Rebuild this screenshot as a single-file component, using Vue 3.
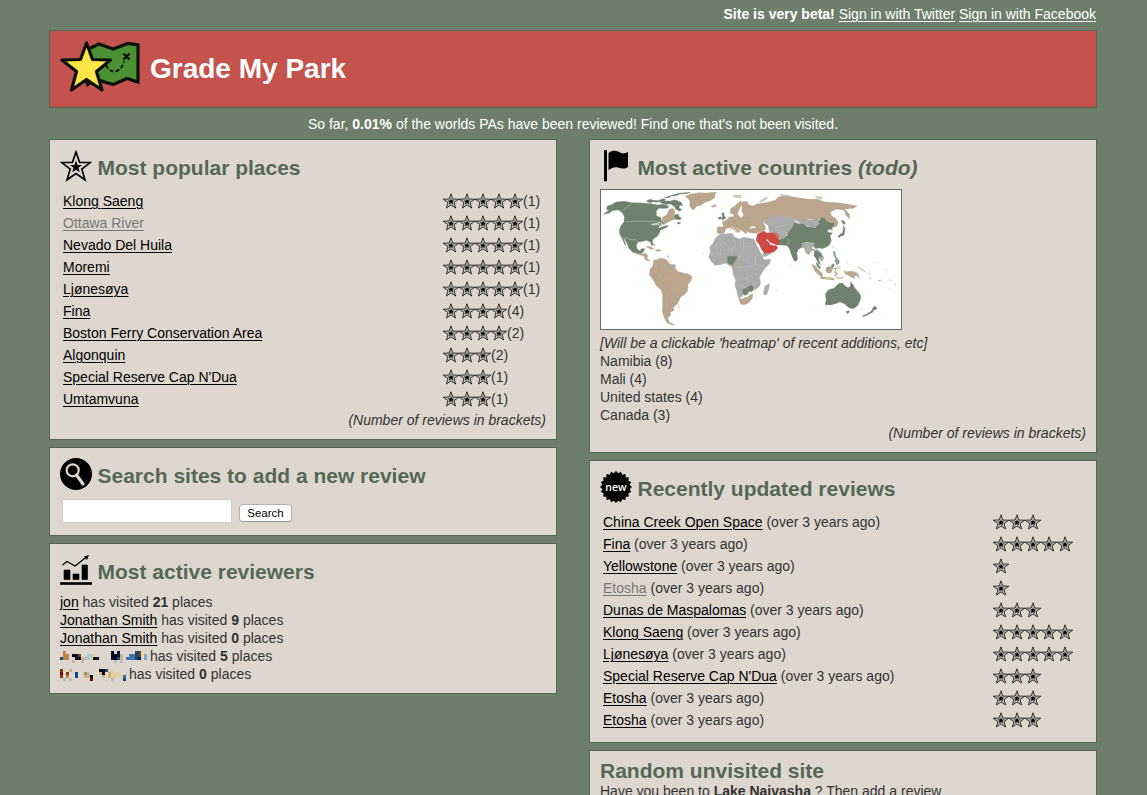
<script setup>
const places = [
  ['Klong Saeng', 5, 1], ['Ottawa River', 5, 1, true], ['Nevado Del Huila', 5, 1], ['Moremi', 5, 1],
  ['Ljønesøya', 5, 1], ['Fina', 4, 4], ['Boston Ferry Conservation Area', 4, 2], ['Algonquin', 3, 2],
  ["Special Reserve Cap N'Dua", 3, 1], ['Umtamvuna', 3, 1],
]
const reviews = [
  ['China Creek Open Space', 3], ['Fina', 5], ['Yellowstone', 1], ['Etosha', 1, true], ['Dunas de Maspalomas', 3],
  ['Klong Saeng', 5], ['Ljønesøya', 5], ["Special Reserve Cap N'Dua", 3], ['Etosha', 3], ['Etosha', 3],
]
const reviewers = [['jon', 21], ['Jonathan Smith', 9], ['Jonathan Smith', 0]]
const countries = [['Namibia', 8], ['Mali', 4], ['United states', 4], ['Canada', 3]]

const palette = {
  k: '#05050f', n: '#0a1648', b: '#0c4d86', l: '#a9c8cf', s: '#7faac4', o: '#bd8447', r: '#7c3e08',
  t: '#d3b17e', c: '#e0d2a5', g: '#bdb8b4', m: '#70000a', u: '#3b75a8',
}
const mosaics = [
  { cols: 29, visited: 5, rows: ['.o...............k.n.....br..', '.oo.knr..llc.....kknt..uubr.s', 'boo..kktglcknc...nkbt.uuubn.s', '....g..g..........g.g........'] },
  { cols: 22, visited: 0, rows: ['r..t.........kkbcc....', 'm.r..b..ol...tk.tccc..', 'r.o..b..ttk...t.tccccu', '.g.g......m......g...b'] },
]
const cells = mosaics.map(m => m.rows.flatMap((r, y) => [...r].map((c, x) => ({ x: x * 3, y: y * 3, c: palette[c] })).filter(p => p.c)))

const sealPoints = Array.from({ length: 40 }, (_, i) => {
  const r = i % 2 ? 13.8 : 16
  const a = (i * Math.PI) / 20
  return `${(16 + r * Math.sin(a)).toFixed(2)},${(16 - r * Math.cos(a)).toFixed(2)}`
}).join(' ')
</script>

<template>
  <div class="page">
    <svg class="defs" width="0" height="0">
      <symbol id="star" viewBox="0 0 32 32">
        <path d="M16 2 19.600 12.300 30.400 12.500 21.800 19 25 29.800 16 23.500 7 29.800 10.200 19 1.600 12.500 12.400 12.300Z" fill="none" stroke="#080808" stroke-width="1.700" />
        <path d="M16 10.500 17.600 14.900 22 15 18.500 17.800 19.700 22.200 16 19.700 12.300 22.200 13.500 17.800 10 15 14.400 14.900Z" fill="#080808" />
      </symbol>
      <symbol id="smallstar" viewBox="0 0 16 16">
        <path d="M8 .8 9.800 6 15.800 6.200 11.100 9.600 12.600 15 8 11.900 3.400 15 4.900 9.600.2 6.200 6.200 6Z" fill="#bbb6b0" stroke="#20201f" stroke-width=".9" />
        <path d="M8 5.400 8.900 7.500 11.100 7.600 9.500 9 10 11.200 8 10.100 6 11.200 6.500 9 4.900 7.600 7.100 7.500Z" fill="#080808" />
      </symbol>
    </svg>
    <div class="signin"><b>Site is very beta!</b> <a>Sign in with Twitter</a> <a>Sign in with Facebook</a></div>
    <header class="banner">
      <svg width="80" height="56" viewBox="0 0 80 56">
        <path d="M26 10 39 4 53 9 68 3.500 78 5V42L67 38.500 53 44.500 38 40 28 44Z" fill="#4b9134" stroke="#0c110c" stroke-width="3.200" />
        <path d="M46 25Q49 32 55 31.500Q62 30 64 21" fill="none" stroke="#0c110c" stroke-width="1.900" stroke-dasharray="4 2.200" />
        <path d="m63.500 13.500 6 6m0-6-6 6" stroke="#0c110c" stroke-width="2.400" />
        <path d="m25 42 8 1-6 4Z" fill="#0c110c" />
        <path d="M26.500 3 32.500 19.500 50.500 20 36.500 31.500 42 50 26.500 39.500 11.500 50 16.500 31.500 2 20 20.500 19.500Z" fill="#fce547" stroke="#0c110c" stroke-width="3.200" stroke-linejoin="round" />
      </svg>
      <h1>Grade My Park</h1>
    </header>
    <p class="tagline">So far, <b>0.01%</b> of the worlds PAs have been reviewed! Find one that's not been visited.</p>

    <main class="columns">
      <div class="column">
        <section class="card">
          <div class="head"><svg width="32" height="32"><use href="#star" /></svg><h2>Most popular places</h2></div>
          <div class="table">
            <div v-for="p in places" :key="p[0]" class="row">
              <span class="name"><a :class="{ seen: p[3] }">{{ p[0] }}</a></span>
              <svg v-for="n in p[1]" :key="n" width="16" height="16"><use href="#smallstar" /></svg><span>({{ p[2] }})</span>
            </div>
          </div>
          <p class="note">(Number of reviews in brackets)</p>
        </section>

        <section class="card search">
          <div class="head">
            <svg width="32" height="32" viewBox="0 0 32 32"><circle cx="16" cy="16" r="16" /><circle cx="12.700" cy="12.300" r="6" fill="none" stroke="#ded7cf" stroke-width="2.200" /><path d="m16.500 17 6.500 9" stroke="#ded7cf" stroke-width="3.200" stroke-linecap="round" /></svg>
            <h2>Search sites to add a new review</h2>
          </div>
          <form @submit.prevent><input type="text" /><button>Search</button></form>
        </section>

        <section class="card">
          <div class="head">
            <svg width="32" height="32" viewBox="0 0 32 32"><path d="M0 28.500h32v2H0zM4 16h6v9.500H4zM13 20h6v5.500h-6zM22 11h5.500v14.500H22z" stroke="#000" stroke-width=".6" stroke-linejoin="round" /><path d="M2.500 11 7 7.500 15 12 26.500 3" fill="none" stroke="#000" stroke-width="1.300" /><path d="m29 1-2 5-3-3.500Z" /></svg>
            <h2>Most active reviewers</h2>
          </div>
          <p v-for="(r, i) in reviewers" :key="i"><a>{{ r[0] }}</a> has visited <b>{{ r[1] }}</b> places</p>
          <p v-for="(m, i) in mosaics" :key="'m' + i" class="masked">
            <svg :width="m.cols * 3" height="12" shape-rendering="crispEdges"><rect v-for="(c, k) in cells[i]" :key="k" :x="c.x" :y="c.y" width="3" height="3" :fill="c.c" /></svg>
            <span>has visited <b>{{ m.visited }}</b> places</span>
          </p>
        </section>
      </div>

      <div class="column">
        <section class="card">
          <div class="head">
            <svg width="32" height="32" viewBox="0 0 32 32"><rect x="4" y="0" width="3" height="31.500" rx="1.300" /><path d="M8.500 3C13-.5 17 1 20 2.500 23 4 25 3.500 28 2V17C24 19.500 21 18.500 18 17.500 14 16.500 11 18.500 8.500 20Z" /></svg>
            <h2>Most active countries <i>(todo)</i></h2>
          </div>
          <svg class="map" viewBox="18 135 900 417" preserveAspectRatio="none">
            <g fill="#aaabaa" stroke="#a4a5a4" stroke-width="1">
              <path d="M345 304 354 295 361 280 375 268 396 266 412 265 418 276 433 282 446 277 462 280 477 282 486 303 494 319 503 335 508 345 527 342 524 355 509 371 500 384 493 398 497 413 494 423 484 432 478 434 475 426 464 422 456 430 444 435 442 454 430 459 425 436 420 422 422 405 415 390 412 370 406 362 391 355 375 359 359 361 348 348 341 336 346 320Z" />
              <path d="m510 423 8-4 4-4 1 10-7 23-7 3-4-6ZM502 325l24-4 5 3-18 10-8 1ZM504 224l18-2 16-11 20-1 20 8 20 3 1 12-9 14-2 14-14 5-2 16-18 4-8-14-19-9-8 5-5-11-7-15 9 4Zm94 0 20-3 23 4 21-3 15 8-7 15-20 2-14-4-17-6ZM600 284l21 6 16 4 15-1 4 10-7 6 12 6-11 2-9 12-8-4-5-15-12-3-11-10Zm66 29 10 8 4 6 7 11-6 12-8-9-6-10-10-1 1-13ZM218 356l23 3 1 8-11 4-12-3ZM779 381l9 4 7 15-8-7-9-1Z" />
            </g>
            <g fill="#6f826d" stroke="#6f826d" stroke-width="1">
              <path d="M24 208 38 199 45 197 35 194 36 184 52 178 63 171 88 169 113 173 140 174 168 176 188 180 205 178 222 184 217 190 191 190 184 198 184 212 196 217 201 230 209 237 202 239 188 250 196 247 211 243 219 240 217 246 209 250 196 256 192 266 187 274 174 283 172 291 175 302 169 300 166 291 154 286 139 290 129 291 124 301 127 313 135 318 140 311 150 311 146 319 140 325 131 327 112 321 101 309 97 296 88 282 86 282 93 299 90 299 81 280 75 270 73 257 77 243 87 231 88 216 83 204 69 194 53 197 42 205Z" />
              <path d="m155 167 9-4 13 3 18 1-8 5-13-2-8 3-10-3Zm36-1 14-5 8 3-7 4 16 0 4 7-12 4-17-6Zm16-8 24-7 20-6 36-3-12 4-20 1-13 5-14 1-5 5Zm19 10 13-4 20 8 4 10-9-1-2 8 9 5-8 4-12-6-1-6-12-8-13-3Zm14 41 10-2 2 8 7 4-3 5-18-2-3-5Zm8 23 10 1-5 4-7-2Z" />
              <path d="M371 217l8-2-1 7-8 0Zm9-14 7 2 1 8 5 6-8 5-6-1 4-8Z" />
              <path d="M398 334h27l0 8-7 8-5 10-11-3-5-5ZM443 435l10-6 7-3 6-5 10 4v10l-8 5-8 0-2 8-9 3-6-3Z" />
              <path d="M592 246 599 231 610 236 624 237 637 246 661 248 676 235 671 232 678 216 689 218 694 227 710 234 718 231 719 244 710 249 713 256 704 252 696 257 702 263 712 263 705 273 709 286 703 300 694 306 682 311 674 308 662 311 656 303 656 293 630 291 619 296 621 305 611 313 605 324 608 343 600 350 592 337 584 312 578 303 568 301 553 300 549 289 557 283 566 281 576 272 578 261Z" />
              <path d="m739 226 8 2 4 8-6 2-4-6Zm6 16 5 8-2 18-4 5-6-1-6 6-3-3 6-7 8-5 2-10Zm-86 75 9 2 10 7 3 9-8-2-2 10 5 16-6-3-7-16-6-7Zm4 35 6 6 8 10-2 4-8-7Zm31 16 13-3 6-9 6 5-7 9-5 10-10-3Z" />
              <path d="M715 319l6 2 0 12 9 10-6 3-7-13Zm3 28 8-5 7 5-1 9-8 3-2-8Z" fill="#8aa89a" stroke="#6f826d" />
              <path d="M693 443 701 434 719 429 722 424 733 415 744 415 749 422 759 428 766 424 767 410 773 418 779 428 787 438 797 451 797 461 789 481 775 491 764 489 756 484 750 477 735 471 721 476 707 480 690 479 694 464 691 452ZM754 499l10-1-4 7-5 0ZM802 513l22-11 8-7 3 5-12 7-17 8Zm29-18 6-11 8 3 0 4-8 5Z" />
            </g>
            <g fill="#bba58f" stroke="#99a274" stroke-width="1">
              <path d="M202 232 202 217 214 211 222 194 234 190 240 199 238 211 239 223 229 226 218 232 208 238Z" />
              <path d="M270 154 286 148 311 143 333 144 365 142 359 149 360 157 348 166 328 173 318 181 305 184 297 194 288 191 284 181 285 168 278 159ZM348 184l14-5 3 3-11 5Z" />
              <path d="M366 263 368 245 385 246 382 230 395 225 403 216 416 215 417 207 406 205 406 192 422 181 433 170 456 170 462 180 476 183 483 178 505 174 525 170 541 166 551 155 570 153 600 157 640 163 665 163 690 171 735 174 786 183 775 190 748 192 764 208 764 221 752 210 748 196 725 192 706 201 709 212 724 222 730 235 722 248 718 232 710 233 694 227 689 217 678 215 670 226 650 221 622 226 598 221 576 217 558 210 538 211 522 222 504 224 507 238 512 252 500 262 480 265 460 262 459 254 472 250 484 249 480 243 468 244 462 253 452 266 440 255 428 264 415 254 404 247 392 252 389 263 377 267Z" />
              <path d="m421 157-7-4 2-2 20 0 4 4-9 4Zm72 13 15-10 9-4-4 7-14 8Zm61-22 31 5-18 2Zm107 6 21 3-4 6-8 0Z" fill="#d5c9b8" />
              <path d="m132 325 9 2 10-2 7 5-2 11 9 6-6 1-9-5-3-10-14-4Zm22-21 13 1 10 7-8 1-13-6Zm26 10 15 0 4 3-13 2Z" />
              <path d="M177 345 187 344 196 339 209 342 218 347 222 356 218 366 229 369 242 371 246 379 265 384 281 387 292 395 287 408 279 418 278 437 268 449 257 455 253 466 243 480 235 489 238 495 226 502 227 511 218 519 223 532 238 539 231 540 216 533 207 516 202 500 203 481 203 449 198 434 183 421 175 405 163 389 165 373 173 364Z" />
              <path d="m432 459 9 4 8-5 10-2 5-5 10-4-3 14-11 13-13 5-10-2-4-11ZM413 360l11-14 3 12 2 10-13 0Zm237-2 11 5 9 11 13 12-1 10-10-6-11-10Zm41 17 8-2 7-8 7-4-1 13-5 11-11-2-5-8Zm74 4 13 1 2 20-12-3-8-6-7-4-4-6Z" />
              <path d="m676 397 32 2 10 4-10 0-30-3Zm46 0 13 3 10-3m-30-26 14-2 7-1m-13 2-4 12 8 5-7 6 7-13m21-2 5 10" fill="none" stroke="#a9aa72" stroke-width="3" />
            </g>
            <path d="m427 211 4-14 8-16 5 4-3 12 5 14-10 8-5-9Z" fill="#fff" />
            <path d="m440 181 10 3 7 12-3 13-9-2-4-10Z" fill="#bba58f" />
            <path d="M487 267 500 262 507 257 516 265 528 264 536 262 549 266 551 278 554 300 543 300 549 309 537 321 522 324 508 325 499 313 492 298 483 286Z" fill="#ce4742" />
            <path d="m513 286 7 4 7 9 13 3 2-4-6-1-12-5-6-9Z" fill="#fff" />
            <path d="m511 237 8 4 3 20-6 2-4-12Z" fill="#fff" />
            <path d="m188 235 9-3 7 8-6-1-3 10-4-12-15 3-6-2Z" fill="none" stroke="#fff" stroke-width="2" />
            <path d="m410 243 12 15 8 9m-6-17 12 8" fill="none" stroke="#fff" stroke-width="2" />
            <g fill="none" stroke="#cbd6ca" stroke-width="1.400">
              <path d="M85 195 113 173M92 229h91l16 6M84 277l24 7 14 0 8 9M576 280l9 8-10 13M592 246l-13 17M679 320l-8-8" />
            </g>
            <path d="m358 282 17-2-2 10-19 17-8 15M373 280l34 32 14-7-4-32M365 295l0 31-22 3m34-36v35l-22 11 2 16m24-28 9-11 20-1v14M436 280v37l-4 20 11-3 2-31 33 0M445 303v-22m-9 50 19 13 5 22 21-8 1-25 9-14m-9 39 15 5 11-3m-57 6-18 3-12-2m32-3-2 14 12 17 12-8 14 5m-51 8 20-1 1 15 14 5 14-9m-49 9 21 13m18-11-2 17 6 5M518 236l28 10 36-8m-61 16 22 15 20-9 18 3m-37 6 5 13M639 295l5 25 9-3" fill="none" stroke="#c8cac8" stroke-width="1.300" />
            <path d="m172 382 14 10-6 14m6-14 12 19 14 6 3 14-7 24-2 49m-10-93 10-12-9-12-8-24m8 24 17-3 4-13m4 65 12 12 9 3-4 12 7 4 3 8-14 0m14 0 4 18M384 231l16 4 3 16m9-32 8 16 12-6m0 0-2-20m-10 26 10 13 15-5 14 9m-13-9-2-15-12-3m14 3 15 6-3-19m-6-15-14-6m-36 51 16-8 22 12 13-9" fill="none" stroke="#9ea276" stroke-width="1.500" />
            <path d="m493 273 17 10 16-18m-42 21 11-4 15 14 11 15m-8-29-10 14" fill="none" stroke="#d86f67" />
            <path d="m174 294 6 9m38 28 3 8m5 13 1-3M325 325h2M542 390h2m-1 46h2M586 360h2M714 303v4M756 352h2m90 0h2m22 24h3m10 29h3m11 13h3m-17 14h2m-50-79h2m-14 48h3m22 7 8-3m-69-40 16 12 7 4m7 3 5 5" fill="none" stroke="#aab0a0" stroke-width="3" />
          </svg>
          <p><i>[Will be a clickable 'heatmap' of recent additions, etc]</i></p>
          <p v-for="c in countries" :key="c[0]">{{ c[0] }} ({{ c[1] }})</p>
          <p class="note">(Number of reviews in brackets)</p>
        </section>

        <section class="card">
          <div class="head">
            <svg width="32" height="32" viewBox="0 0 32 32"><polygon :points="sealPoints" /><text x="16" y="19.500" text-anchor="middle" class="seal">new</text></svg>
            <h2>Recently updated reviews</h2>
          </div>
          <div class="table recent">
            <div v-for="(r, i) in reviews" :key="i" class="row">
              <span class="name"><a :class="{ seen: r[2] }">{{ r[0] }}</a> (over 3 years ago)</span>
              <svg v-for="n in r[1]" :key="n" width="16" height="16"><use href="#smallstar" /></svg>
            </div>
          </div>
        </section>

        <section class="card random">
          <h2>Random unvisited site</h2>
          <p>Have you been to <b>Lake Naivasha</b> ? Then add a review</p>
        </section>
      </div>
    </main>
  </div>
</template>

<style>
body { background: #6d7f6b; overflow: hidden; }
</style>
<style scoped>
.page { width: 1048px; height: 795px; margin-left: 49px; overflow: hidden; font: 14px/18px "Liberation Sans", Arial, sans-serif; color: #333; }
.defs { display: block; }
p, h1, h2 { margin: 0; }
a { color: #000; text-decoration: underline; text-underline-offset: 2px; text-decoration-thickness: 1px; }
a.seen { color: #777; }
.signin { height: 25px; padding: 5px 1px 0 0; text-align: right; color: #fff; }
.signin a { color: #fff; }
.banner { box-sizing: border-box; height: 78px; border: 1px solid #556653; background: #c4534d; padding: 9px 10px; display: flex; gap: 10px; }
.banner h1 { font-size: 28px; line-height: 58px; color: #fff; }
.tagline { height: 24px; padding-top: 7px; text-align: center; color: #fff; }
.columns { display: flex; gap: 32px; }
.column { width: 508px; display: flex; flex-direction: column; gap: 7px; }
.card { border: 1px solid #556653; background: #ded7cf; padding: 10px; }
.head { height: 39px; display: flex; gap: 5.5px; }
.head svg { flex: none; }
h2 { font-size: 21px; line-height: 36px; color: #566855; white-space: nowrap; }
.table { padding: 1px 3px; }
.row { height: 22px; display: flex; align-items: center; }
.name { width: 380px; }
.recent .name { width: 390px; }
.note { text-align: right; font-style: italic; }
.search form { box-sizing: border-box; height: 28px; display: flex; align-items: flex-start; padding: 2px 2px 0; gap: 7px; }
.search input { box-sizing: border-box; width: 170px; height: 24px; border: 1px solid #ccc; background: #fff; padding: 0; margin: 0; }
.search button { width: 53px; height: 18px; margin: 5px 0 0; padding: 0; border: 1px solid #b4b0ac; border-bottom-color: #999; border-radius: 4px; background: #fff; color: #000; font: 11.5px/15px "Liberation Sans", Arial, sans-serif; }
.masked { display: flex; align-items: center; gap: 3px; height: 18px; }
.masked svg { margin-top: 2px; }
.map { box-sizing: border-box; display: block; width: 302px; height: 141px; border: 1px solid #666; background: #fff; margin-bottom: 4px; }
.seal { font: 600 10.5px "Open Sans", sans-serif; fill: #fff; }
.random h2 { line-height: 20px; height: 21px; }
</style>
